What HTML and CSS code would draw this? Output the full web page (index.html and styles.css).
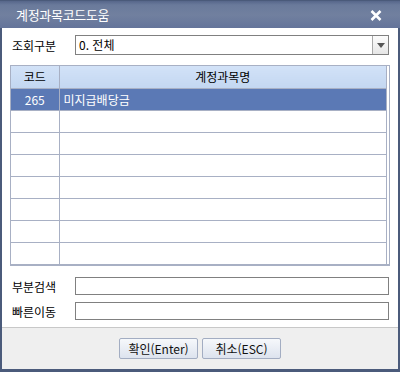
FILE: index.html
```html
<!DOCTYPE html>
<html lang="ko">
<head>
    <meta charset="UTF-8">
    <title>계정과목코드도움</title>
    <link rel="stylesheet" href="styles.css">
</head>
<body>
    <div class="dialog">
        <div class="title-bar">
            <span class="title">계정과목코드도움</span>
            <span class="close-btn">
                <svg width="12" height="11" viewBox="0 0 12 11"><path d="M1.5 1 L10.5 10 M10.5 1 L1.5 10" stroke="#fff" stroke-width="2.6"/></svg>
            </span>
        </div>

        <div class="dialog-body">
            <div class="field-row search-row">
                <label class="field-label">조회구분</label>
                <div class="select-box">
                    <span class="select-value">0. 전체</span>
                    <span class="select-arrow"></span>
                </div>
            </div>

            <div class="grid-wrap">
                <table class="grid">
                    <thead>
                        <tr>
                            <th class="col-code">코드</th>
                            <th class="col-name">계정과목명</th>
                        </tr>
                    </thead>
                    <tbody>
                        <tr class="selected"><td class="code">265</td><td class="name">미지급배당금</td></tr>
                        <tr><td></td><td></td></tr>
                        <tr><td></td><td></td></tr>
                        <tr><td></td><td></td></tr>
                        <tr><td></td><td></td></tr>
                        <tr><td></td><td></td></tr>
                        <tr><td></td><td></td></tr>
                        <tr class="last"><td></td><td></td></tr>
                    </tbody>
                </table>
            </div>

            <div class="field-row input-row">
                <label class="field-label">부분검색</label>
                <input type="text" class="text-input">
            </div>
            <div class="field-row input-row second">
                <label class="field-label">빠른이동</label>
                <input type="text" class="text-input">
            </div>
        </div>

        <div class="dialog-footer">
            <button class="btn">확인(Enter)</button>
            <button class="btn">취소(ESC)</button>
        </div>
    </div>
</body>
</html>
```

FILE: styles.css
```css
* {
    box-sizing: border-box;
}

body {
    margin: 0;
    padding: 0;
    font-family: "Noto Sans CJK KR", "Liberation Sans", sans-serif;
    font-size: 12px;
    color: #000;
    background: #4b5b7b;
}

.dialog {
    width: 400px;
    height: 372px;
    border-style: solid;
    border-color: #4b5b7b;
    border-width: 0 2px 3px 2px;
    display: flex;
    flex-direction: column;
    background: #fff;
}

.title-bar {
    height: 28px;
    margin: 0 -2px;
    padding: 0 18px 0 16px;
    display: flex;
    align-items: center;
    justify-content: space-between;
    background: linear-gradient(to bottom, #56668a 0px, #6a7a9b 4px, #71809f 14px, #63739a 28px);
    border-top: 1px solid #4a5a7a;
}

.title {
    color: #fff;
    font-size: 13px;
    letter-spacing: -0.3px;
}

.close-btn {
    display: flex;
    align-items: center;
    margin-top: 1px;
}

.dialog-body {
    height: 299px;
    padding: 7px 9px 0 8px;
    background: #fff;
}

.field-row {
    display: flex;
    align-items: center;
}

.field-label {
    width: 65px;
    padding-left: 2px;
    font-size: 12px;
    flex-shrink: 0;
}

.search-row {
    height: 20px;
}

.select-box {
    flex: 1;
    height: 20px;
    border: 1px solid #808080;
    display: flex;
    align-items: stretch;
    background: #fff;
}

.select-value {
    flex: 1;
    padding-left: 3px;
    line-height: 18px;
    font-size: 12px;
}

.select-arrow {
    width: 16px;
    border-left: 1px solid #a8a8a8;
    background: linear-gradient(to bottom, #fcfcfc, #e6e6e6);
    position: relative;
}

.select-arrow::after {
    content: "";
    position: absolute;
    left: 4px;
    top: 7px;
    border-width: 5px 4px 0 4px;
    border-style: solid;
    border-color: #555 transparent transparent transparent;
}

.grid-wrap {
    margin-top: 10px;
    border: 1px solid #a8b0c4;
    border-bottom-width: 2px;
    width: 380px;
}

.grid {
    border-collapse: collapse;
    width: 376px;
    table-layout: fixed;
}

.grid th,
.grid td {
    height: 22px;
    padding: 0;
    border-right: 1px solid #a8b0c4;
    border-bottom: 1px solid #a8b0c4;
    font-size: 12px;
    font-weight: normal;
}

.col-code {
    width: 48px;
}

.grid thead th {
    background: linear-gradient(to bottom, #d2e2f7, #c3d7f1);
    text-align: center;
}

.grid tr.last td {
    border-bottom: none;
}

.grid tr.selected td {
    background: #5b79b5;
    color: #fff;
}

.grid td.code {
    text-align: center;
}

.grid td.name {
    padding-left: 4px;
}

.input-row {
    margin-top: 11px;
    height: 18px;
}

.input-row.second {
    margin-top: 7px;
}

.text-input {
    flex: 1;
    height: 18px;
    border: 1px solid #808080;
    margin: 0;
    padding: 0 3px;
    outline: none;
}

.dialog-footer {
    flex: 1;
    border-top: 1px solid #c8c8c8;
    background: #efefef;
    display: flex;
    justify-content: center;
    align-items: flex-start;
    gap: 4px;
    padding-top: 10px;
}

.btn {
    width: 79px;
    height: 21px;
    border: 1px solid #a3adc2;
    border-radius: 2px;
    background: linear-gradient(to bottom, #f6f8fb, #dde3ee);
    font-family: "Noto Sans CJK KR", "Liberation Sans", sans-serif;
    font-size: 12px;
    color: #111;
    padding: 0;
    cursor: pointer;
}
```
